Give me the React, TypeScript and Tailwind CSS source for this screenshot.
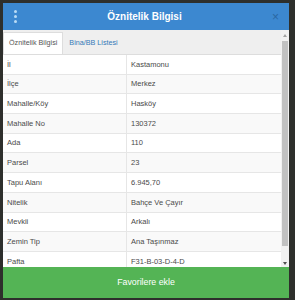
const rows: [string, string][] = [
  ['İl', 'Kastamonu'],
  ['İlçe', 'Merkez'],
  ['Mahalle/Köy', 'Hasköy'],
  ['Mahalle No', '130372'],
  ['Ada', '110'],
  ['Parsel', '23'],
  ['Tapu Alanı', '6.945,70'],
  ['Nitelik', 'Bahçe Ve Çayır'],
  ['Mevkii', 'Arkalı'],
  ['Zemin Tip', 'Ana Taşınmaz'],
  ['Pafta', 'F31-B-03-D-4-D'],
]

export default function App() {
  return (
    <div
      className="w-[295px] h-[300px] overflow-hidden bg-[#2e2f2c] pt-[3px] pl-[3px]"
      style={{ fontFamily: '"Liberation Sans", Arial, sans-serif' }}
    >
      <div className="w-[286px] h-[295px] flex flex-col bg-white">
        {/* Header */}
        <div className="h-[27px] flex-shrink-0 bg-[#3c88d0] flex items-center px-[10px] relative">
          <div className="flex flex-col gap-[2px] ml-[1px]">
            <span className="block w-[3px] h-[3px] rounded-full bg-[#b9dcf5]" />
            <span className="block w-[3px] h-[3px] rounded-full bg-[#b9dcf5]" />
            <span className="block w-[3px] h-[3px] rounded-full bg-[#b9dcf5]" />
          </div>
          <div className="flex-1 text-center text-white font-bold text-[10px]">
            Öznitelik Bilgisi
          </div>
          <span className="text-[#2a67a3] text-[12px] leading-none">×</span>
        </div>

        {/* Body */}
        <div className="flex flex-1 min-h-0">
          <div className="flex-1 min-w-0 overflow-hidden">
            {/* Tabs */}
            <div className="h-[25px] bg-[#efefef] flex items-end border-b border-[#dddddd]">
              <div className="h-[22px] bg-white border border-b-0 border-[#dddddd] px-[5px] flex items-center text-[7.2px] text-[#555555]">
                Öznitelik Bilgisi
              </div>
              <div className="h-[22px] px-[6px] flex items-center text-[7.2px] text-[#3479b7]">
                Bina/BB Listesi
              </div>
            </div>

            {/* Table */}
            <div>
              {rows.map(([k, v], i) => (
                <div
                  key={k}
                  className={`h-[19.7px] flex border-b border-[#e6e6e6] text-[7.5px] text-[#4a4a4a] ${
                    i % 2 === 1 ? 'bg-[#f9f9f9]' : 'bg-white'
                  }`}
                >
                  <div className="w-[124px] pl-[4px] flex items-center border-r border-[#e6e6e6]">{k}</div>
                  <div className="flex-1 pl-[4px] flex items-center">{v}</div>
                </div>
              ))}
            </div>
          </div>

          {/* Scrollbar */}
          <div className="w-[8px] flex-shrink-0 bg-[#f1f1f1] flex flex-col items-center pt-[2px] pb-[1px]">
            <div className="h-[6px] flex items-center justify-center">
              <div className="w-0 h-0 border-l-[2.5px] border-r-[2.5px] border-b-[3px] border-l-transparent border-r-transparent border-b-[#a3a3a3]" />
            </div>
            <div className="w-[6px] mt-[3px] h-[205px] bg-[#c1c1c1]" />
            <div className="flex-1" />
            <div className="h-[6px] flex items-center justify-center">
              <div className="w-0 h-0 border-l-[2.5px] border-r-[2.5px] border-t-[3px] border-l-transparent border-r-transparent border-t-[#505050]" />
            </div>
          </div>
        </div>

        {/* Footer button */}
        <div className="h-[31px] flex-shrink-0 bg-[#54b455] flex items-center justify-center text-white text-[8.8px]">
          Favorilere ekle
        </div>
      </div>
    </div>
  )
}
